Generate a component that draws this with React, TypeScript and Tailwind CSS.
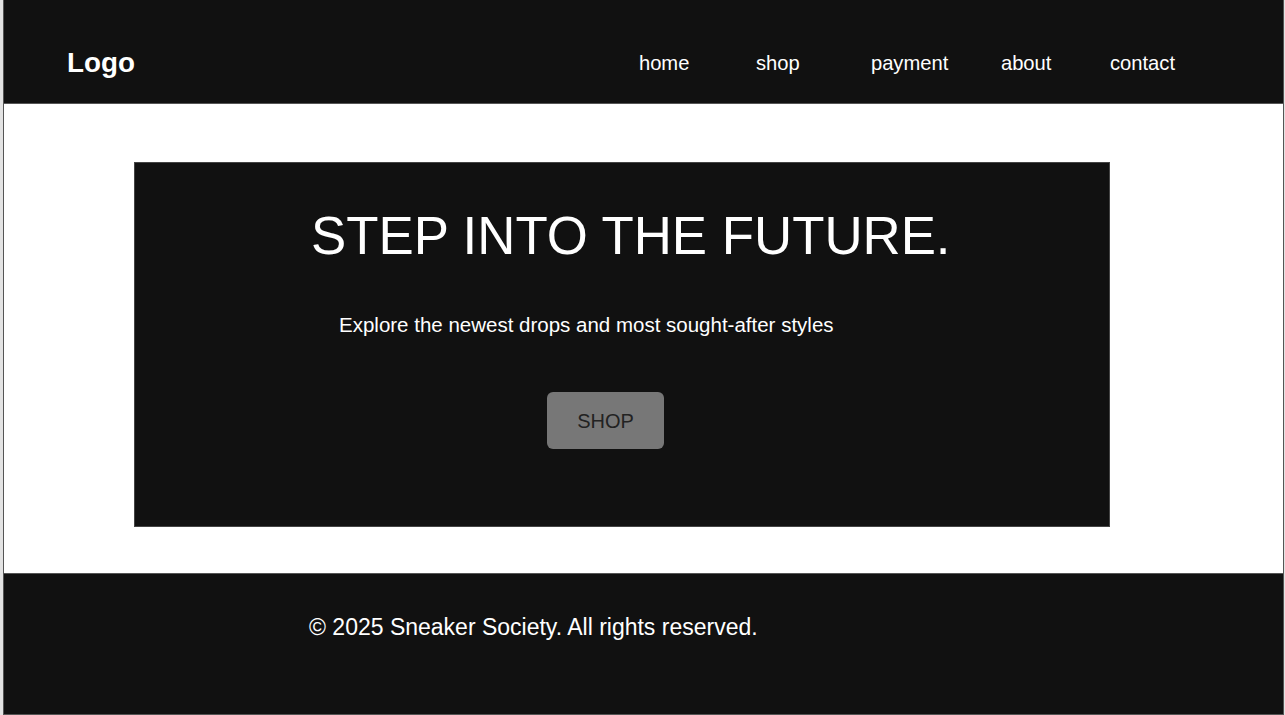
export default function App() {
  const font = { fontFamily: '"Liberation Sans", Arial, sans-serif' };
  return (
    <div className="h-[715px] bg-[#e3e3e3] pl-[3px] pr-[1px]" style={font}>
      <div className="flex h-full flex-col border-x border-b border-[#555] bg-white">
        <header className="flex h-[104px] items-center border-b border-[#555] bg-[#111] pl-[63px] pr-[108px] pt-[23px] text-white">
          <div className="text-[27.8px] font-bold">Logo</div>
          <nav className="ml-auto flex items-center text-[20.2px]">
            <a className="w-[117px]">home</a>
            <a className="w-[115px]">shop</a>
            <a className="w-[130px]">payment</a>
            <a className="w-[109px]">about</a>
            <a>contact</a>
          </nav>
        </header>

        <main className="flex h-[469px] pl-[130px] pt-[58px]">
          <section className="flex h-[365px] w-[976px] flex-col border border-[#444] bg-[#111]">
            <h1 className="ml-[176px] mt-[43px] text-[52.8px] leading-[60px] text-white">
              STEP INTO THE FUTURE.
            </h1>
            <p className="ml-[204px] mt-[47px] text-[20.5px] leading-6 text-white">
              Explore the newest drops and most sought-after styles
            </p>
            <div className="ml-[412px] mt-[55px]">
              <button className="h-[57px] w-[117px] rounded-md bg-[#777] text-[20px] text-[#222]">
                SHOP
              </button>
            </div>
          </section>
        </main>

        <footer className="flex-1 border-t border-[#555] bg-[#111] pl-[305px] pt-[36px]">
          <p className="text-[23px] text-white">
            © 2025 Sneaker Society. All rights reserved.
          </p>
        </footer>
      </div>
    </div>
  );
}
